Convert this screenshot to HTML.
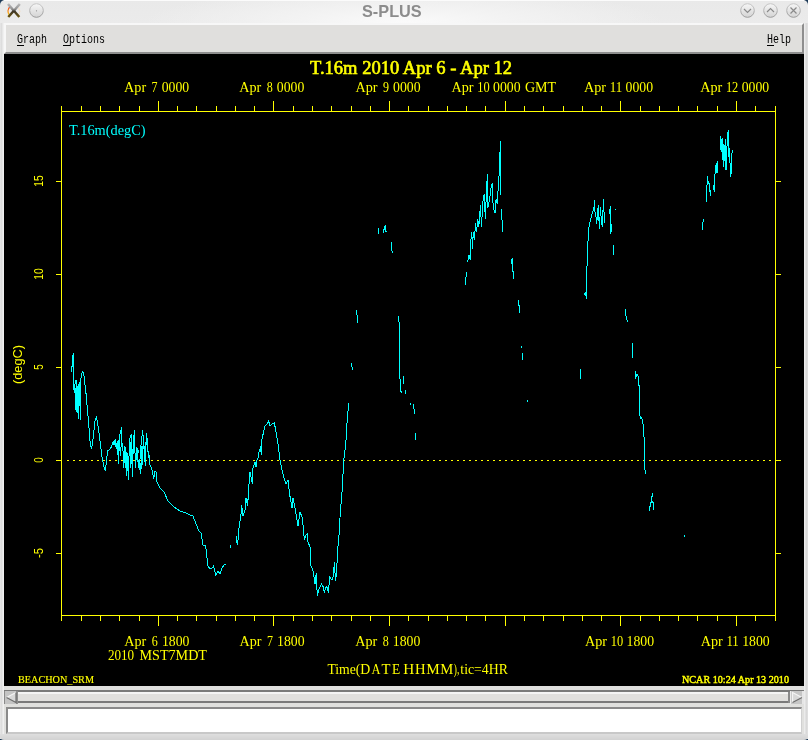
<!DOCTYPE html>
<html><head><meta charset="utf-8">
<style>
html,body{margin:0;padding:0;width:808px;height:740px;overflow:hidden;background:#1c3a58;}
*{box-sizing:border-box;}
.abs{position:absolute;}
#title{left:0;top:0;width:808px;height:24px;background:radial-gradient(ellipse 260px 34px at 404px 22px,#fafafa,#f3f3f3 40%,rgba(233,233,233,0) 100%),linear-gradient(#e9e9e9,#ebebeb);border-radius:5px 5px 0 0;}
#ttext{left:362px;top:2px;font:bold 16.3px "Liberation Sans",sans-serif;color:#8c8c8c;will-change:transform;}
#menubar{left:4px;top:23px;width:800px;height:31px;background:#e0dfdd;border-top:2px solid #f7f7f7;border-left:2px solid #f7f7f7;border-right:2px solid #8e8e8e;border-bottom:2px solid #8e8e8e;}
.menu{font:10px "Liberation Mono",monospace;color:#000;top:33px;transform-origin:0 0;transform:scaleY(1.3);will-change:transform;}
.ul{height:1px;background:#000;top:45px;width:7px;}
#plot{left:4px;top:54px;width:800px;height:632px;background:#000;}
#lborder{left:0;top:23px;width:4px;height:716px;background:linear-gradient(90deg,#e8e8e8,#dcdcdc 35%,#e8e8e8 65%,#f4f4f4);}
#rborder{left:804px;top:23px;width:4px;height:716px;background:linear-gradient(90deg,#f0f0f0,#d8d8d8 60%,#e2e2e2);}
#bottom{left:4px;top:686px;width:800px;height:48px;background:#e0e0de;}
#wbot{left:0;top:734px;width:808px;height:6px;background:linear-gradient(#dedede,#d2d2d2);border-radius:0 0 4px 4px;}
</style></head><body>
<div id="title" class="abs"></div>
<div class="abs" style="left:4px;top:0;width:800px;height:1px;background:#fbfbfb;"></div>
<div id="lborder" class="abs"></div>
<div id="rborder" class="abs"></div>
<div id="ttext" class="abs">S-PLUS</div>
<div id="menubar" class="abs"></div>
<div class="abs menu" style="left:17px;">Graph</div>
<div class="abs menu" style="left:63px;">Options</div>
<div class="abs menu" style="left:767px;">Help</div>
<div class="abs ul" style="left:17px;"></div>
<div class="abs ul" style="left:63px;"></div>
<div class="abs ul" style="left:767px;"></div>
<div id="plot" class="abs"></div>
<div id="bottom" class="abs"></div>
<div id="wbot" class="abs"></div>
<!-- scrollbar -->
<div class="abs" style="left:4px;top:690px;width:800px;height:2px;background:#7a7a7a;"></div>
<div class="abs" style="left:4px;top:692px;width:800px;height:2px;background:#f4f4f4;"></div>
<div class="abs" style="left:4px;top:694px;width:800px;height:7px;background:#e0dfdd;"></div>
<div class="abs" style="left:4px;top:701px;width:800px;height:2px;background:#7a7a7a;"></div>
<div class="abs" style="left:4px;top:691px;width:14px;height:13px;background:#c4c4c4;border-left:1px solid #8a8a8a;border-right:2px solid #8e8e8e;"></div>
<div class="abs" style="left:788px;top:692px;width:2px;height:11px;background:#8a8a8a;"></div>
<div class="abs" style="left:790px;top:691px;width:14px;height:13px;background:#c6c6c6;border-left:1px solid #ececec;border-right:2px solid #e6e6e6;"></div>
<svg class="abs" style="left:0;top:680px" width="808" height="30" viewBox="0 680 808 30">
<path d="M6.5 697.5 L16 692.5 L16 702.5 Z" fill="#d8d8d8"/>
<path d="M6.5 697.5 L16 692.5" stroke="#f4f4f4" stroke-width="1.2"/>
<path d="M6.5 697.5 L16 702.5 L16 692.5" stroke="#6e6e6e" stroke-width="1.2" fill="none"/>
<path d="M802 697.5 L792.5 692.5 L792.5 702.5 Z" fill="#d8d8d8"/>
<path d="M792.5 702.5 L792.5 692.5 L802 697.5" stroke="#f4f4f4" stroke-width="1.2" fill="none"/>
<path d="M802 697.5 L792.5 702.5" stroke="#6e6e6e" stroke-width="1.2"/>
</svg>
<!-- text field -->
<div class="abs" style="left:6px;top:707px;width:796px;height:27px;background:#fff;border-top:2px solid #8a8a8a;border-left:2px solid #8a8a8a;border-right:1px solid #d0d0d0;border-bottom:2px solid #c8c8c8;"></div>
<svg class="abs" style="left:0;top:0;will-change:transform" width="808" height="740" viewBox="0 0 808 740">
<!-- title buttons -->
<defs>
<linearGradient id="btn" x1="0" y1="0" x2="0" y2="1"><stop offset="0" stop-color="#f6f6f6"/><stop offset="1" stop-color="#d4d4d4"/></linearGradient>
<linearGradient id="btnb" x1="0" y1="0" x2="0" y2="1"><stop offset="0" stop-color="#c8c8c8"/><stop offset="1" stop-color="#9a9a9a"/></linearGradient>
<linearGradient id="og" x1="0" y1="0" x2="0" y2="1"><stop offset="0" stop-color="#f04020"/><stop offset="0.5" stop-color="#f88010"/><stop offset="1" stop-color="#f8d020"/></linearGradient>
<linearGradient id="xg" gradientUnits="userSpaceOnUse" x1="0" y1="4" x2="0" y2="17"><stop offset="0" stop-color="#b8b8b8"/><stop offset="0.4" stop-color="#909090"/><stop offset="0.55" stop-color="#3c3428"/><stop offset="1" stop-color="#6a5410"/></linearGradient>
</defs>
<circle cx="36.5" cy="10.5" r="6.8" fill="url(#btn)" stroke="url(#btnb)" stroke-width="1"/>
<circle cx="36.5" cy="10.8" r="0.6" fill="#888"/>
<circle cx="747.5" cy="10.5" r="6.8" fill="url(#btn)" stroke="url(#btnb)" stroke-width="1"/>
<circle cx="770.5" cy="10.5" r="6.8" fill="url(#btn)" stroke="url(#btnb)" stroke-width="1"/>
<circle cx="793.5" cy="10.5" r="6.8" fill="url(#btn)" stroke="url(#btnb)" stroke-width="1"/>
<path d="M744 9 L747.5 12.5 L751 9" stroke="#8a8a8a" stroke-width="1.2" fill="none"/>
<path d="M767 12 L770.5 8.5 L774 12" stroke="#8a8a8a" stroke-width="1.2" fill="none"/>
<path d="M790.5 7.5 L796.5 13.5 M796.5 7.5 L790.5 13.5" stroke="#8a8a8a" stroke-width="1.2" fill="none"/>
<path d="M10 6.8 A6.2 6.2 0 0 0 9.3 15" stroke="url(#og)" stroke-width="1.4" fill="none"/>
<path d="M18.5 7.5 A6.2 6.2 0 0 1 18.5 15" stroke="#f4dcc0" stroke-width="0.9" fill="none"/>
<path d="M8 4 L19.3 17 M19.8 4 L8.3 17" stroke="url(#xg)" stroke-width="2.5"/>
<path d="M61.5 111 V616 M775.5 111 V616 M61 111.5 H776 M61 615.5 H776" stroke="#ffff00" stroke-width="1" fill="none"/>
<path d="M61.5 111 V106 M61.5 616 V621 M81.5 111 V106 M81.5 616 V621 M100.5 111 V106 M100.5 616 V621 M119.5 111 V106 M119.5 616 V621 M139.5 111 V106 M139.5 616 V621 M158.5 111 V101 M158.5 616 V626 M177.5 111 V106 M177.5 616 V621 M196.5 111 V106 M196.5 616 V621 M216.5 111 V106 M216.5 616 V621 M235.5 111 V106 M235.5 616 V621 M254.5 111 V106 M254.5 616 V621 M273.5 111 V101 M273.5 616 V626 M293.5 111 V106 M293.5 616 V621 M312.5 111 V106 M312.5 616 V621 M331.5 111 V106 M331.5 616 V621 M351.5 111 V106 M351.5 616 V621 M370.5 111 V106 M370.5 616 V621 M389.5 111 V101 M389.5 616 V626 M408.5 111 V106 M408.5 616 V621 M428.5 111 V106 M428.5 616 V621 M447.5 111 V106 M447.5 616 V621 M466.5 111 V106 M466.5 616 V621 M485.5 111 V106 M485.5 616 V621 M505.5 111 V101 M505.5 616 V626 M524.5 111 V106 M524.5 616 V621 M543.5 111 V106 M543.5 616 V621 M563.5 111 V106 M563.5 616 V621 M582.5 111 V106 M582.5 616 V621 M601.5 111 V106 M601.5 616 V621 M620.5 111 V101 M620.5 616 V626 M640.5 111 V106 M640.5 616 V621 M659.5 111 V106 M659.5 616 V621 M678.5 111 V106 M678.5 616 V621 M697.5 111 V106 M697.5 616 V621 M717.5 111 V106 M717.5 616 V621 M736.5 111 V101 M736.5 616 V626 M755.5 111 V106 M755.5 616 V621 M775.5 111 V106 M775.5 616 V621" stroke="#ffff00" stroke-width="1" fill="none"/>
<path d="M56 181.5 H61 M776 181.5 H781 M56 274.5 H61 M776 274.5 H781 M56 367.5 H61 M776 367.5 H781 M56 460.5 H61 M776 460.5 H781 M56 553.5 H61 M776 553.5 H781" stroke="#ffff00" stroke-width="1" fill="none"/>
<path d="M67 460.5 H775" stroke="#ffff00" stroke-width="1" stroke-dasharray="2 4" fill="none"/>
<text x="310" y="73.7" font-family="Liberation Serif" font-size="18" font-weight="normal" fill="#ffff00" text-anchor="start" textLength="202" lengthAdjust="spacingAndGlyphs" stroke="#ffff00" stroke-width="0.6">T.16m 2010 Apr 6 - Apr 12</text>
<text x="124.1" y="91.7" font-family="Liberation Serif" font-size="15" font-weight="normal" fill="#ffff00" text-anchor="start" textLength="22" lengthAdjust="spacingAndGlyphs" >Apr</text>
<text x="151.6" y="91.7" font-family="Liberation Serif" font-size="15" font-weight="normal" fill="#ffff00" text-anchor="start" textLength="6" lengthAdjust="spacingAndGlyphs" >7</text>
<text x="161.7" y="91.7" font-family="Liberation Serif" font-size="15" font-weight="normal" fill="#ffff00" text-anchor="start" textLength="27.5" lengthAdjust="spacingAndGlyphs" >0000</text>
<text x="239.2" y="91.7" font-family="Liberation Serif" font-size="15" font-weight="normal" fill="#ffff00" text-anchor="start" textLength="22" lengthAdjust="spacingAndGlyphs" >Apr</text>
<text x="266.7" y="91.7" font-family="Liberation Serif" font-size="15" font-weight="normal" fill="#ffff00" text-anchor="start" textLength="6" lengthAdjust="spacingAndGlyphs" >8</text>
<text x="276.8" y="91.7" font-family="Liberation Serif" font-size="15" font-weight="normal" fill="#ffff00" text-anchor="start" textLength="27.5" lengthAdjust="spacingAndGlyphs" >0000</text>
<text x="355.5" y="91.7" font-family="Liberation Serif" font-size="15" font-weight="normal" fill="#ffff00" text-anchor="start" textLength="22" lengthAdjust="spacingAndGlyphs" >Apr</text>
<text x="383.0" y="91.7" font-family="Liberation Serif" font-size="15" font-weight="normal" fill="#ffff00" text-anchor="start" textLength="6" lengthAdjust="spacingAndGlyphs" >9</text>
<text x="393.1" y="91.7" font-family="Liberation Serif" font-size="15" font-weight="normal" fill="#ffff00" text-anchor="start" textLength="27.5" lengthAdjust="spacingAndGlyphs" >0000</text>
<text x="451.5" y="91.7" font-family="Liberation Serif" font-size="15" font-weight="normal" fill="#ffff00" text-anchor="start" textLength="22" lengthAdjust="spacingAndGlyphs" >Apr</text>
<text x="477.2" y="91.7" font-family="Liberation Serif" font-size="15" font-weight="normal" fill="#ffff00" text-anchor="start" textLength="12.4" lengthAdjust="spacingAndGlyphs" >10</text>
<text x="493.0" y="91.7" font-family="Liberation Serif" font-size="15" font-weight="normal" fill="#ffff00" text-anchor="start" textLength="27.5" lengthAdjust="spacingAndGlyphs" >0000</text>
<text x="524.9" y="91.7" font-family="Liberation Serif" font-size="15" font-weight="normal" fill="#ffff00" text-anchor="start" textLength="31.2" lengthAdjust="spacingAndGlyphs" >GMT</text>
<text x="584" y="91.7" font-family="Liberation Serif" font-size="15" font-weight="normal" fill="#ffff00" text-anchor="start" textLength="22" lengthAdjust="spacingAndGlyphs" >Apr</text>
<text x="609.7" y="91.7" font-family="Liberation Serif" font-size="15" font-weight="normal" fill="#ffff00" text-anchor="start" textLength="12.4" lengthAdjust="spacingAndGlyphs" >11</text>
<text x="625.5" y="91.7" font-family="Liberation Serif" font-size="15" font-weight="normal" fill="#ffff00" text-anchor="start" textLength="27.5" lengthAdjust="spacingAndGlyphs" >0000</text>
<text x="700.2" y="91.7" font-family="Liberation Serif" font-size="15" font-weight="normal" fill="#ffff00" text-anchor="start" textLength="22" lengthAdjust="spacingAndGlyphs" >Apr</text>
<text x="725.9000000000001" y="91.7" font-family="Liberation Serif" font-size="15" font-weight="normal" fill="#ffff00" text-anchor="start" textLength="12.4" lengthAdjust="spacingAndGlyphs" >12</text>
<text x="741.7" y="91.7" font-family="Liberation Serif" font-size="15" font-weight="normal" fill="#ffff00" text-anchor="start" textLength="27.5" lengthAdjust="spacingAndGlyphs" >0000</text>
<text x="124.3" y="645.7" font-family="Liberation Serif" font-size="15" font-weight="normal" fill="#ffff00" text-anchor="start" textLength="22" lengthAdjust="spacingAndGlyphs" >Apr</text>
<text x="151.8" y="645.7" font-family="Liberation Serif" font-size="15" font-weight="normal" fill="#ffff00" text-anchor="start" textLength="6" lengthAdjust="spacingAndGlyphs" >6</text>
<text x="161.9" y="645.7" font-family="Liberation Serif" font-size="15" font-weight="normal" fill="#ffff00" text-anchor="start" textLength="27.5" lengthAdjust="spacingAndGlyphs" >1800</text>
<text x="239.5" y="645.7" font-family="Liberation Serif" font-size="15" font-weight="normal" fill="#ffff00" text-anchor="start" textLength="22" lengthAdjust="spacingAndGlyphs" >Apr</text>
<text x="267.0" y="645.7" font-family="Liberation Serif" font-size="15" font-weight="normal" fill="#ffff00" text-anchor="start" textLength="6" lengthAdjust="spacingAndGlyphs" >7</text>
<text x="277.1" y="645.7" font-family="Liberation Serif" font-size="15" font-weight="normal" fill="#ffff00" text-anchor="start" textLength="27.5" lengthAdjust="spacingAndGlyphs" >1800</text>
<text x="355.2" y="645.7" font-family="Liberation Serif" font-size="15" font-weight="normal" fill="#ffff00" text-anchor="start" textLength="22" lengthAdjust="spacingAndGlyphs" >Apr</text>
<text x="382.7" y="645.7" font-family="Liberation Serif" font-size="15" font-weight="normal" fill="#ffff00" text-anchor="start" textLength="6" lengthAdjust="spacingAndGlyphs" >8</text>
<text x="392.8" y="645.7" font-family="Liberation Serif" font-size="15" font-weight="normal" fill="#ffff00" text-anchor="start" textLength="27.5" lengthAdjust="spacingAndGlyphs" >1800</text>
<text x="585" y="645.7" font-family="Liberation Serif" font-size="15" font-weight="normal" fill="#ffff00" text-anchor="start" textLength="22" lengthAdjust="spacingAndGlyphs" >Apr</text>
<text x="610.7" y="645.7" font-family="Liberation Serif" font-size="15" font-weight="normal" fill="#ffff00" text-anchor="start" textLength="12.4" lengthAdjust="spacingAndGlyphs" >10</text>
<text x="626.5" y="645.7" font-family="Liberation Serif" font-size="15" font-weight="normal" fill="#ffff00" text-anchor="start" textLength="27.5" lengthAdjust="spacingAndGlyphs" >1800</text>
<text x="700.7" y="645.7" font-family="Liberation Serif" font-size="15" font-weight="normal" fill="#ffff00" text-anchor="start" textLength="22" lengthAdjust="spacingAndGlyphs" >Apr</text>
<text x="726.4000000000001" y="645.7" font-family="Liberation Serif" font-size="15" font-weight="normal" fill="#ffff00" text-anchor="start" textLength="12.4" lengthAdjust="spacingAndGlyphs" >11</text>
<text x="742.2" y="645.7" font-family="Liberation Serif" font-size="15" font-weight="normal" fill="#ffff00" text-anchor="start" textLength="27.5" lengthAdjust="spacingAndGlyphs" >1800</text>
<text x="107.9" y="659.7" font-family="Liberation Serif" font-size="15" font-weight="normal" fill="#ffff00" text-anchor="start" textLength="26.2" lengthAdjust="spacingAndGlyphs" >2010</text>
<text x="139.5" y="659.7" font-family="Liberation Serif" font-size="15" font-weight="normal" fill="#ffff00" text-anchor="start" textLength="67.5" lengthAdjust="spacingAndGlyphs" >MST7MDT</text>
<text x="327.4" y="673.9" font-family="Liberation Serif" font-size="15" font-weight="normal" fill="#ffff00" text-anchor="start" textLength="33" lengthAdjust="spacingAndGlyphs" >Time(</text>
<text x="360.3" y="673.9" font-family="Liberation Serif" font-size="15" font-weight="normal" fill="#ffff00" text-anchor="start" textLength="10" lengthAdjust="spacingAndGlyphs" >D</text>
<text x="371.4" y="673.9" font-family="Liberation Serif" font-size="15" font-weight="normal" fill="#ffff00" text-anchor="start" textLength="9" lengthAdjust="spacingAndGlyphs" >A</text>
<text x="381.4" y="673.9" font-family="Liberation Serif" font-size="15" font-weight="normal" fill="#ffff00" text-anchor="start" textLength="9" lengthAdjust="spacingAndGlyphs" >T</text>
<text x="392" y="673.9" font-family="Liberation Serif" font-size="15" font-weight="normal" fill="#ffff00" text-anchor="start" textLength="8.2" lengthAdjust="spacingAndGlyphs" >E</text>
<text x="403.2" y="673.9" font-family="Liberation Serif" font-size="15" font-weight="normal" fill="#ffff00" text-anchor="start" textLength="11" lengthAdjust="spacingAndGlyphs" >H</text>
<text x="415" y="673.9" font-family="Liberation Serif" font-size="15" font-weight="normal" fill="#ffff00" text-anchor="start" textLength="10.6" lengthAdjust="spacingAndGlyphs" >H</text>
<text x="426.2" y="673.9" font-family="Liberation Serif" font-size="15" font-weight="normal" fill="#ffff00" text-anchor="start" textLength="13.5" lengthAdjust="spacingAndGlyphs" >M</text>
<text x="440.3" y="673.9" font-family="Liberation Serif" font-size="15" font-weight="normal" fill="#ffff00" text-anchor="start" textLength="13" lengthAdjust="spacingAndGlyphs" >M</text>
<text x="453.8" y="673.9" font-family="Liberation Serif" font-size="15" font-weight="normal" fill="#ffff00" text-anchor="start" textLength="5.5" lengthAdjust="spacingAndGlyphs" >),</text>
<text x="460.3" y="673.9" font-family="Liberation Serif" font-size="15" font-weight="normal" fill="#ffff00" text-anchor="start" textLength="47.6" lengthAdjust="spacingAndGlyphs" >tic=4HR</text>
<text x="18" y="683" font-family="Liberation Serif" font-size="10.5" font-weight="normal" fill="#ffff00" text-anchor="start" textLength="76" lengthAdjust="spacingAndGlyphs" stroke="#ffff00" stroke-width="0.15">BEACHON_SRM</text>
<text x="682" y="683" font-family="Liberation Serif" font-size="10.5" font-weight="normal" fill="#ffff00" text-anchor="start" textLength="107" lengthAdjust="spacingAndGlyphs" stroke="#ffff00" stroke-width="0.45">NCAR 10:24 Apr 13 2010</text>
<text x="69" y="135.3" font-family="Liberation Serif" font-size="14" font-weight="normal" fill="#00ffff" text-anchor="start" textLength="76.5" lengthAdjust="spacingAndGlyphs" >T.16m(degC)</text>
<g transform="translate(43,181) rotate(-90)"><text x="0" y="0" font-family="Liberation Sans" font-size="12.5" font-weight="normal" fill="#ffff00" text-anchor="middle" textLength="11.5" lengthAdjust="spacingAndGlyphs" >15</text></g>
<g transform="translate(43,274) rotate(-90)"><text x="0" y="0" font-family="Liberation Sans" font-size="12.5" font-weight="normal" fill="#ffff00" text-anchor="middle" textLength="11.5" lengthAdjust="spacingAndGlyphs" >10</text></g>
<g transform="translate(43,367) rotate(-90)"><text x="0" y="0" font-family="Liberation Sans" font-size="12.5" font-weight="normal" fill="#ffff00" text-anchor="middle" textLength="5.5" lengthAdjust="spacingAndGlyphs" >5</text></g>
<g transform="translate(43,460) rotate(-90)"><text x="0" y="0" font-family="Liberation Sans" font-size="12.5" font-weight="normal" fill="#ffff00" text-anchor="middle" textLength="5.5" lengthAdjust="spacingAndGlyphs" >0</text></g>
<g transform="translate(43,553) rotate(-90)"><text x="0" y="0" font-family="Liberation Sans" font-size="12.5" font-weight="normal" fill="#ffff00" text-anchor="middle" textLength="10" lengthAdjust="spacingAndGlyphs" >-5</text></g>
<g transform="translate(22,364.5) rotate(-90)"><text x="0" y="0" font-family="Liberation Sans" font-size="12.5" font-weight="normal" fill="#ffff00" text-anchor="middle" textLength="39" lengthAdjust="spacingAndGlyphs" >(degC)</text></g>
<polyline points="71.2,371.5 71.2,367 72.3,366.6 72.3,359 73.4,353 73.4,386.6 74.4,392.6 74.4,387 76,380 76.6,400 77.7,408.8 78.4,418.5 79.3,381.8 79.8,401.2 80.6,419.6 80.9,378.5 82.3,371.5 83.4,372.6 84.2,377.4 85.2,387.2 86.3,395.8 87.4,409.9 88.5,420.7 90,441 91.4,449 92.6,443 95,421 96.6,417 99,433 102,457 104.6,470 105.5,470.3 107,455.6 108,450.5 109.6,449.5 111.1,447.5 113.1,441.4 114.1,445.4 115.1,439.3 116.2,448.5 117.2,441.4 118.2,458.6 119.2,435.3 120.7,432.7 121.4,427.2 121.7,443.4 122.7,444.4 123.8,467.7 124.8,447.5 125.8,448.5 126.8,475.9 127.8,454.6 128.5,479.9 129.3,443.4 130.4,435.3 131.6,434.3 132.2,476.9 133.2,445.4 134.4,430.2 135.4,467.7 137,447.5 138.5,465.7 139.5,469.8 140.5,449.5 141.5,441.4 142.5,430.2 143.5,439.3 144.6,460.6 145.6,453.5 146.6,433.3 147.6,445.4 148.4,457.6 148.8,451.5 149.6,464.7 151.7,467.7 152.7,473.8 153.7,478.9 154.7,471.8 156,472 157,482 160,488 164,492 168,501 174,507 180,511 186,513 190,515 193,516 196,524 199,531 201,533 203,545 205.6,546 208,566 210,569 212,568 213.6,566 215.6,575 217,573 218,571 220,574 222,568 225,564 226,564" stroke="#00ffff" stroke-width="1" fill="none" shape-rendering="crispEdges"/>
<polyline points="117.5,446 118.5,464 119.5,440 120.5,456 121.5,438" stroke="#00ffff" stroke-width="1" fill="none" shape-rendering="crispEdges"/>
<polyline points="125,452 126,468 127,452 127.5,470" stroke="#00ffff" stroke-width="1" fill="none" shape-rendering="crispEdges"/>
<polyline points="130,441 130.8,468 131.3,440 132.8,460 133.6,438" stroke="#00ffff" stroke-width="1" fill="none" shape-rendering="crispEdges"/>
<polyline points="136,452 137.5,462 138.2,450" stroke="#00ffff" stroke-width="1" fill="none" shape-rendering="crispEdges"/>
<polyline points="139.8,460 140.8,474 142,446 143,465" stroke="#00ffff" stroke-width="1" fill="none" shape-rendering="crispEdges"/>
<polyline points="144.3,446 145.2,466 146,442" stroke="#00ffff" stroke-width="1" fill="none" shape-rendering="crispEdges"/>
<polyline points="75.2,388 76.1,412 77.2,386 78,404 79,384" stroke="#00ffff" stroke-width="1" fill="none" shape-rendering="crispEdges"/>
<polyline points="230,545 230,548" stroke="#00ffff" stroke-width="1" fill="none" shape-rendering="crispEdges"/>
<polyline points="236.4,536 236.4,540 237.6,545 239,528 241,514 241.6,505 243,516 245,510 246,498 247.6,506 249,484 250,472 252.4,484 253,468 253.6,466 255,462 256,467 257,460 258,458 259,452 260.4,448 261.6,455 262,439 263.6,432 265,426 267,424 268.6,421 270,426 272,424 274.4,423 276,432 278,444 280,460 282,470 284,478 286,484 288,480 289.6,494 292,508 293,498 295,508 298,526 300,512 302.4,518 304,536 304.7,539 306,535 307.4,534 308,542 310,547 310.8,566 312,567.6 313.5,573 315,584 316.2,573 317.3,596 319,589 321.6,584 323,586.5 324.3,592 325.7,588 327,586.5 328.4,593 329.7,577 331.8,580 333,577 334.5,562 335.4,581 336.5,574 337.6,551 339,535 340,517.6 340.8,505 341.6,500 343.7,461 345.3,448 346,440 347.1,421.6 348,411.5 348.5,403.4" stroke="#00ffff" stroke-width="1" fill="none" shape-rendering="crispEdges"/>
<polyline points="351.1,362.8 352.6,370" stroke="#00ffff" stroke-width="1" fill="none" shape-rendering="crispEdges"/>
<polyline points="356.2,310 357.2,316 357.8,323.3" stroke="#00ffff" stroke-width="1" fill="none" shape-rendering="crispEdges"/>
<polyline points="378.5,228.3 378.5,233.7" stroke="#00ffff" stroke-width="1" fill="none" shape-rendering="crispEdges"/>
<polyline points="383.5,233 384.4,227 385.4,225 385.6,231.3 386.6,232" stroke="#00ffff" stroke-width="1" fill="none" shape-rendering="crispEdges"/>
<polyline points="391.4,242.3 391.7,249.6 392.6,252.6" stroke="#00ffff" stroke-width="1" fill="none" shape-rendering="crispEdges"/>
<polyline points="398.4,316.2 399.2,323.3 399.4,369 400.4,385 401.2,393.3" stroke="#00ffff" stroke-width="1" fill="none" shape-rendering="crispEdges"/>
<polyline points="403.2,376 403.2,384" stroke="#00ffff" stroke-width="1" fill="none" shape-rendering="crispEdges"/>
<polyline points="405.3,390 405.3,394" stroke="#00ffff" stroke-width="1" fill="none" shape-rendering="crispEdges"/>
<polyline points="410.5,403 410.5,404.5" stroke="#00ffff" stroke-width="1" fill="none" shape-rendering="crispEdges"/>
<polyline points="413.4,404.4 414.6,413.5" stroke="#00ffff" stroke-width="1" fill="none" shape-rendering="crispEdges"/>
<polyline points="415.4,432.8 415.4,440" stroke="#00ffff" stroke-width="1" fill="none" shape-rendering="crispEdges"/>
<polyline points="465.4,284.6 466.5,271.6" stroke="#00ffff" stroke-width="1" fill="none" shape-rendering="crispEdges"/>
<polyline points="467.5,262 469,255.4 470.1,259.7 470.6,242.4 471.9,231.6 472.3,249 473.4,231.6 474.5,240 475.5,223 476.6,231.6 477.7,218.6 478.8,227.3 480.5,204.6 481.4,227.3 483.1,199.2 484.2,193.8 485.3,218.6 486.4,192.7 487.4,174.3 487.9,207.8 489.6,199.2 491.3,186.2 492.2,183 492.8,201.4 493.9,210 495,213.2 496.1,199.2 497.2,203.5 499.3,172.2 500.4,140.8 500.4,195" stroke="#00ffff" stroke-width="1" fill="none" shape-rendering="crispEdges"/>
<polyline points="501.5,209 502.6,231.6" stroke="#00ffff" stroke-width="1" fill="none" shape-rendering="crispEdges"/>
<polyline points="511.2,264 512.3,257.6 513.4,279.2" stroke="#00ffff" stroke-width="1" fill="none" shape-rendering="crispEdges"/>
<polyline points="518.4,300.4 518.4,305.5 519.6,305.5 519.6,312.6" stroke="#00ffff" stroke-width="1" fill="none" shape-rendering="crispEdges"/>
<polyline points="521.4,346 521.4,347.5" stroke="#00ffff" stroke-width="1" fill="none" shape-rendering="crispEdges"/>
<polyline points="522.4,353 522.4,360" stroke="#00ffff" stroke-width="1" fill="none" shape-rendering="crispEdges"/>
<polyline points="527.3,400 527.3,401.5" stroke="#00ffff" stroke-width="1" fill="none" shape-rendering="crispEdges"/>
<polyline points="580.9,369 580.9,378.5" stroke="#00ffff" stroke-width="1" fill="none" shape-rendering="crispEdges"/>
<polyline points="584.1,294.8 585.6,292.6 586.4,298.5 586.4,271 587.5,262.8 588.1,237.6 588.6,228.7 589.6,224.2 590.5,219.7 591.6,215.3 593,210.8 593.8,209.3 594.5,200.4 595,212.3 596,216.8 596.5,224.2 597.5,215.3 598.2,204.9 599.4,228.7 600.5,207.1 601.2,219.7 602.4,227.2 603.4,198.9 603.9,210.8 604.9,223.4" stroke="#00ffff" stroke-width="1" fill="none" shape-rendering="crispEdges"/>
<polyline points="609.4,213.8 610.4,206.4 610.9,233.9 611.6,224.2 611.6,228.7" stroke="#00ffff" stroke-width="1" fill="none" shape-rendering="crispEdges"/>
<polyline points="615.8,208.5 615.8,210" stroke="#00ffff" stroke-width="1" fill="none" shape-rendering="crispEdges"/>
<polyline points="613.4,245 613.4,255.4" stroke="#00ffff" stroke-width="1" fill="none" shape-rendering="crispEdges"/>
<polyline points="625.3,308.9 626.2,317.8 628.2,322.3" stroke="#00ffff" stroke-width="1" fill="none" shape-rendering="crispEdges"/>
<polyline points="632.1,343 632.1,358" stroke="#00ffff" stroke-width="1" fill="none" shape-rendering="crispEdges"/>
<polyline points="635.7,371.3 635,378.8 637.1,374.3 638.6,377.3 639.2,389.2 640.1,418.9 641.6,417.4 643.1,424.8 644,436.7 644.6,460.5 645.2,473.8" stroke="#00ffff" stroke-width="1" fill="none" shape-rendering="crispEdges"/>
<polyline points="649.5,511 649.5,507 650.5,506 650.5,503 651.5,502 651.5,497 652.5,496 652.5,493" stroke="#00ffff" stroke-width="1" fill="none" shape-rendering="crispEdges"/>
<polyline points="651.5,500 652.5,502 653.5,503 653.5,510" stroke="#00ffff" stroke-width="1" fill="none" shape-rendering="crispEdges"/>
<polyline points="684,535 684,536.5" stroke="#00ffff" stroke-width="1" fill="none" shape-rendering="crispEdges"/>
<polyline points="702.2,229.5 703.3,219" stroke="#00ffff" stroke-width="1" fill="none" shape-rendering="crispEdges"/>
<polyline points="706.2,202 706.5,197 707.4,176 708.2,182.5 709.5,184 710.3,196.2 710.8,189.8" stroke="#00ffff" stroke-width="1" fill="none" shape-rendering="crispEdges"/>
<polyline points="713.5,185 714.3,192.2 714.7,179.2 715.6,165.4 716,173.5 717.3,160.6 717.6,173.5" stroke="#00ffff" stroke-width="1" fill="none" shape-rendering="crispEdges"/>
<polyline points="720.5,136.2 721.1,152.4 722.1,137.8 723.3,167 724,144.3 724.9,160.6 725.4,139.5 726,170.3 727,146 728.1,130.5 728.6,157.3 729.7,147.6 730.2,172 730.9,176.8 731.9,154 732.5,150" stroke="#00ffff" stroke-width="1" fill="none" shape-rendering="crispEdges"/>
</svg>
</body></html>
